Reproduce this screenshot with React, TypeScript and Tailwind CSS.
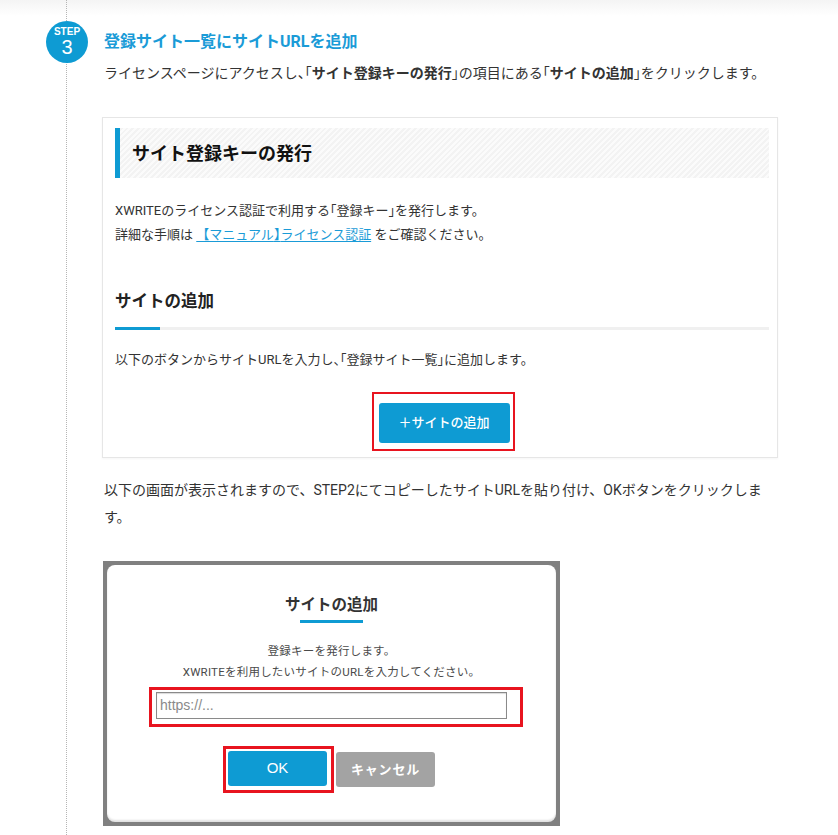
import React from 'react';

const FONT = "font-['Roboto','Noto_Sans_CJK_JP',sans-serif]";

// half-width punctuation, like the palt spacing in the original
const H: React.FC<{ c: string }> = ({ c }) => <span className="[font-feature-settings:'halt']">{c}</span>;

const StepBadge: React.FC<{ num: number }> = ({ num }) => (
  <div className="absolute left-[-21px] top-[21px] flex h-[42px] w-[42px] flex-col items-center justify-center rounded-full bg-[#0e9bd3] pt-[1px] text-white">
    <span className="text-[10px] font-bold leading-[10px] font-['Liberation_Sans',sans-serif]">STEP</span>
    <span className="text-[20px] leading-[21px] font-['Liberation_Sans',sans-serif]">{num}</span>
  </div>
);

const LicenseCard: React.FC = () => (
  <div className="border border-[#e6e6e6] bg-white pb-[6px] pl-3 pr-2 pt-[10px] shadow-[0_1px_2px_rgba(0,0,0,0.04)]">
    {/* Heading */}
    <div className="flex h-[50px] items-center border-l-[5px] border-[#0e9bd3] bg-[repeating-linear-gradient(-45deg,#f3f3f3_0,#f3f3f3_2px,#fbfbfb_2px,#fbfbfb_4px)] pl-3">
      <h2 className="text-[18px] font-bold text-[#111]">サイト登録キーの発行</h2>
    </div>

    <div className="pt-[21px] text-[13px] leading-6 text-[#333]">
      <p>XWRITEのライセンス認証で利用する<H c="「" />登録キー<H c="」" />を発行します。</p>
      <p>
        詳細な手順は{' '}
        <a href="#" className="text-[#1a9bd7] underline underline-offset-2">
          【マニュアル<H c="】" />ライセンス認証
        </a>
        {' '}をご確認ください。
      </p>
    </div>

    <h3 className="mt-[43px] text-[16.5px] font-bold leading-6 text-[#222]">サイトの追加</h3>
    <div className="mt-[13px] flex h-[3px] bg-[#f0f0f0]">
      <div className="w-[45px] bg-[#0e9bd3]" />
    </div>

    <p className="mt-[18px] text-[13px] leading-6 text-[#333]">
      以下のボタンからサイトURLを入力し<H c="、" />「登録サイト一覧<H c="」" />に追加します。
    </p>

    <div className="mt-[20px] flex justify-center pl-[2px]">
      <div className="border-2 border-[#e8141f] pb-[6px] pl-[5px] pr-[3px] pt-[9px]">
        <button className="h-10 w-[131px] rounded-[3px] bg-[#0e9bd3] text-[13px] font-medium text-white">
          ＋サイトの追加
        </button>
      </div>
    </div>
  </div>
);

const ModalShot: React.FC = () => (
  <div className="w-[457px] bg-[#808080] p-1">
    <div className="flex flex-col items-center rounded-[8px] bg-white pb-[29px] pt-[28px] shadow-[inset_0_-2px_2px_rgba(0,0,0,0.12)]">
      <h4 className="text-[15.5px] font-bold leading-6 text-[#333]">サイトの追加</h4>
      <div className="mt-[3px] h-[3px] w-[63px] bg-[#0e9bd3]" />
      <div className="mt-[18px] text-center text-[11.5px] leading-[21px] tracking-[0.02em] text-[#4a4a4a]">
        <p>登録キーを発行します。</p>
        <p>XWRITEを利用したいサイトのURLを入力してください。</p>
      </div>
      <div className="ml-[42px] mt-[4px] w-[374px] self-start border-[3px] border-[#e8141f] pb-[5px] pl-[4px] pr-[13px] pt-[2px]">
        <div className="flex h-[27px] items-center border border-[#8a8a8a] bg-white px-[3px] shadow-[inset_0_1px_1px_rgba(0,0,0,0.15)]">
          <span className="text-[14px] text-[#8a8a8a] font-['Liberation_Sans',sans-serif]">https://...</span>
        </div>
      </div>
      <div className="mt-[19px] flex items-center gap-[2px] pr-[5px]">
        <div className="border-[3px] border-[#e8141f] pb-[4px] pl-[2px] pr-[4px] pt-[2px]">
          <button className="h-[35px] w-[99px] rounded-[3px] bg-[#0e9bd3] text-[15px] text-white font-['Liberation_Sans',sans-serif]">
            OK
          </button>
        </div>
        <button className="h-[35px] w-[99px] rounded-[3px] bg-[#a3a3a3] text-[13px] font-bold tracking-[0.06em] text-white">
          キャンセル
        </button>
      </div>
    </div>
  </div>
);

export default function App() {
  return (
    <div className={`min-h-[835px] bg-[linear-gradient(#f4f4f4,#ffffff_16px)] ${FONT}`}>
      <div className="relative ml-[66px] min-h-[835px] border-l border-dotted border-[#b5b5b5] pl-[37px] pr-[60px] pt-[30px]">
        <StepBadge num={3} />
        <h1 className="text-[16px] font-bold leading-6 text-[#1a9bd7]">登録サイト一覧にサイトURLを追加</h1>
        <p className="mt-[6px] whitespace-nowrap text-[14px] leading-[27px] text-[#333]">
          ライセンスページにアクセスし<H c="、" />「<strong>サイト登録キーの発行</strong><H c="」" />の項目にある<H c="「" /><strong>サイトの追加</strong><H c="」" />をクリックします。
        </p>

        <div className="-ml-[2px] mt-[30px] w-[676px]">
          <LicenseCard />
        </div>

        <p className="mt-[19px] w-[680px] text-[14px] leading-[27px] text-[#333]">
          以下の画面が表示されますので、STEP2にてコピーしたサイトURLを貼り付け、OKボタンをクリックします。
        </p>

        <div className="-ml-[1px] mt-[30px]">
          <ModalShot />
        </div>
      </div>
    </div>
  );
}
